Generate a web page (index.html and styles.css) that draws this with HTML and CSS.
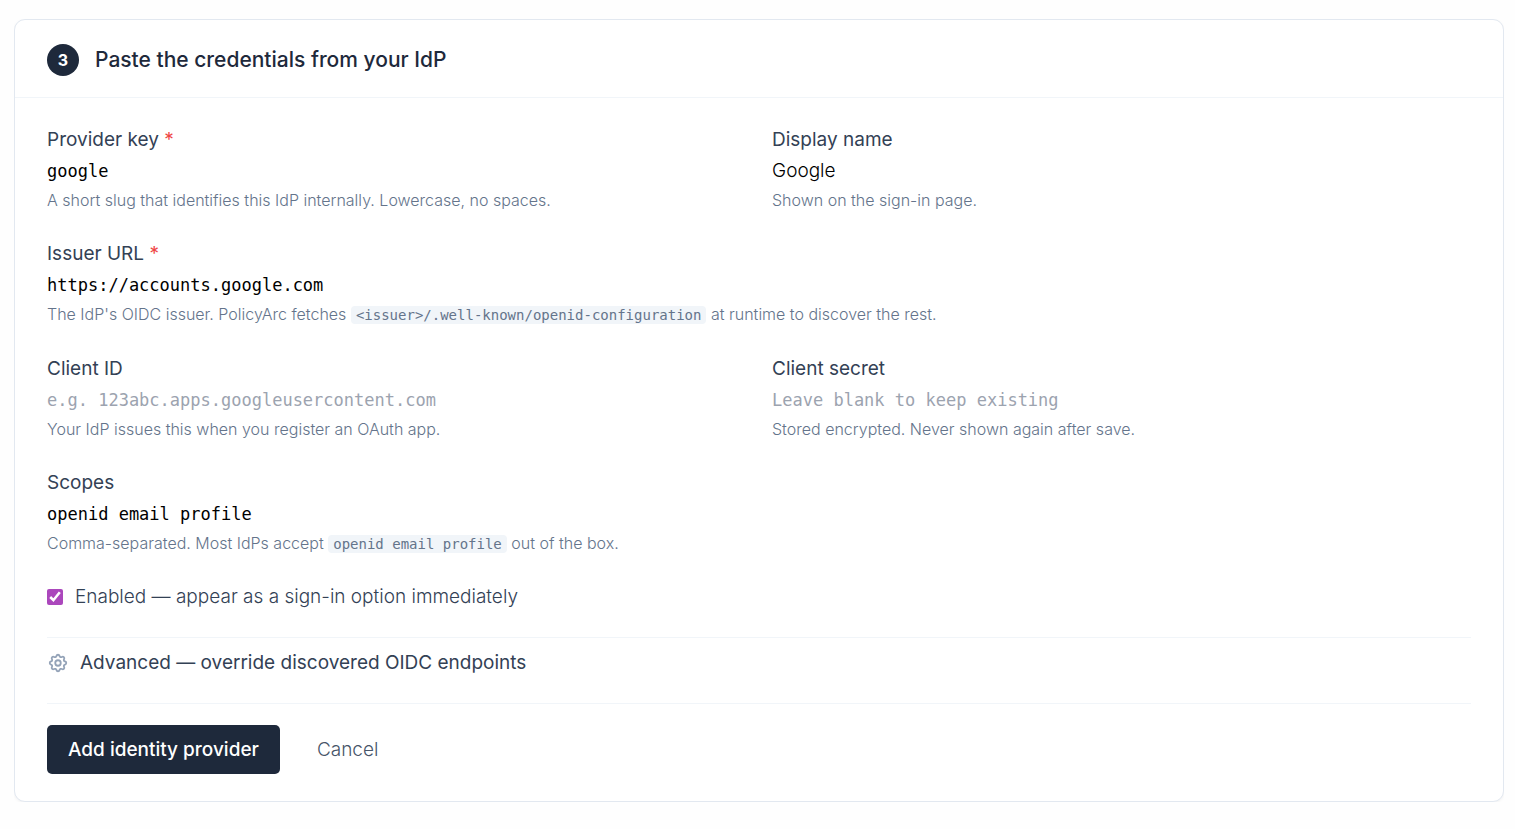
FILE: index.html
```html
<!DOCTYPE html>
<html lang="en">
  <head>
    <meta charset="UTF-8" />
    <meta name="viewport" content="width=device-width, initial-scale=1" />
    <title>Add identity provider</title>
    <link rel="stylesheet" href="styles.css">
  </head>
  <body>
    <section class="card">
      <header class="card-header">
        <span class="step">3</span>
        <h2>Paste the credentials from your IdP</h2>
      </header>

      <form class="card-body">
        <div class="fields">
          <div class="field">
            <label for="providerKey">Provider key <span class="required">*</span></label>
            <input class="mono" type="text" id="providerKey" value="google" required />
            <p class="help">A short slug that identifies this IdP internally. Lowercase, no spaces.</p>
          </div>

          <div class="field">
            <label for="displayName">Display name</label>
            <input type="text" id="displayName" value="Google" />
            <p class="help">Shown on the sign-in page.</p>
          </div>

          <div class="field wide">
            <label for="issuer">Issuer URL <span class="required">*</span></label>
            <input class="mono" type="text" id="issuer" value="https://accounts.google.com" required />
            <p class="help">The IdP's OIDC issuer. PolicyArc fetches <code>&lt;issuer&gt;/.well-known/openid-configuration</code> at runtime to discover the rest.</p>
          </div>

          <div class="field">
            <label for="clientId">Client ID</label>
            <input class="mono" type="text" id="clientId" placeholder="e.g. 123abc.apps.googleusercontent.com" />
            <p class="help">Your IdP issues this when you register an OAuth app.</p>
          </div>

          <div class="field">
            <label for="clientSecret">Client secret</label>
            <input class="mono" type="password" id="clientSecret" placeholder="Leave blank to keep existing" />
            <p class="help">Stored encrypted. Never shown again after save.</p>
          </div>

          <div class="field wide">
            <label for="scopes">Scopes</label>
            <input class="mono" type="text" id="scopes" value="openid email profile" />
            <p class="help">Comma-separated. Most IdPs accept <code>openid email profile</code> out of the box.</p>
          </div>
        </div>

        <label class="toggle" for="enabled">
          <input type="checkbox" id="enabled" checked />
          Enabled — appear as a sign-in option immediately
        </label>

        <details class="advanced">
          <summary>
            <svg viewBox="0 0 24 24" width="22" height="22" fill="none" stroke="currentColor" stroke-width="2" stroke-linecap="round" stroke-linejoin="round" aria-hidden="true">
              <path d="M10.325 4.317c.426-1.756 2.924-1.756 3.35 0a1.724 1.724 0 002.573 1.066c1.543-.94 3.31.826 2.37 2.37a1.724 1.724 0 001.065 2.572c1.756.426 1.756 2.924 0 3.35a1.724 1.724 0 00-1.066 2.573c.94 1.543-.826 3.31-2.37 2.37a1.724 1.724 0 00-2.572 1.065c-.426 1.756-2.924 1.756-3.35 0a1.724 1.724 0 00-2.573-1.066c-1.543.94-3.31-.826-2.37-2.37a1.724 1.724 0 00-1.065-2.572c-1.756-.426-1.756-2.924 0-3.35a1.724 1.724 0 001.066-2.573c-.94-1.543.826-3.31 2.37-2.37.996.608 2.296.07 2.572-1.065z" />
              <circle cx="12" cy="12" r="3" />
            </svg>
            Advanced — override discovered OIDC endpoints
          </summary>
        </details>

        <div class="actions">
          <button class="primary" type="submit">Add identity provider</button>
          <button class="cancel" type="button">Cancel</button>
        </div>
      </form>
    </section>
  </body>
</html>
```
FILE: styles.css
```css
* {
  box-sizing: border-box;
}
body {
  margin: 19px 11px 27px 14px;
  background: #fefefe;
  color: #334155;
  font-family: Inter, sans-serif;
  font-size: 19px;
  font-weight: 300;
  line-height: 28px;
}
h2,
p {
  margin: 0;
}
.card {
  background: #fff;
  border: 1px solid #e2e8f0;
  border-radius: 11px;
  box-shadow: 0 1px 3px rgba(15, 23, 42, 0.05);
}
.card-header {
  display: flex;
  align-items: center;
  gap: 16px;
  padding: 24px 32px 21px;
  border-bottom: 1px solid #f1f5f9;
}
.step {
  display: flex;
  align-items: center;
  justify-content: center;
  width: 32px;
  height: 32px;
  border-radius: 50%;
  background: #1e293b;
  color: #fff;
  font-size: 16px;
  font-weight: 700;
}
h2 {
  color: #1e293b;
  font-size: 21px;
  font-weight: 500;
  line-height: 32px;
}
.card-body {
  padding: 28px 32px 27px;
}
.fields {
  display: grid;
  grid-template-columns: 1fr 1fr;
  gap: 28px 26px;
}
.field {
  display: flex;
  flex-direction: column;
  gap: 3px;
}
.wide {
  grid-column: 1 / -1;
}
.field label {
  font-weight: 400;
}
.required {
  color: #ef4444;
}
.field input {
  width: 100%;
  height: 28px;
  padding: 0;
  border: none;
  outline: none;
  background: transparent;
  color: #000;
  font: inherit;
}
.field .mono {
  font-family: "DejaVu Sans Mono", monospace;
  font-size: 17px;
}
.field input::placeholder {
  color: #9ca3af;
}
.help {
  color: #64748b;
  font-size: 16px;
  line-height: 24px;
}
code {
  padding: 1px 5px;
  border-radius: 4px;
  background: #f1f5f9;
  font-family: "DejaVu Sans Mono", monospace;
  font-size: 14px;
}
.toggle {
  display: flex;
  align-items: center;
  gap: 12px;
  margin: 27px 0 26px;
}
.toggle input {
  width: 16px;
  height: 16px;
  margin: 0;
  accent-color: #ab47bc;
}
.advanced {
  padding: 11px 0 26px;
  border-top: 1px solid #f1f5f9;
}
.advanced summary {
  display: flex;
  align-items: center;
  gap: 11px;
  font-weight: 400;
  list-style: none;
  cursor: pointer;
}
.advanced svg {
  color: #94a3b8;
}
.actions {
  display: flex;
  gap: 16px;
  padding-top: 21px;
  border-top: 1px solid #f1f5f9;
}
button {
  height: 49px;
  padding: 0 21px;
  border: none;
  border-radius: 5px;
  font: inherit;
  cursor: pointer;
}
.primary {
  background: #1e293b;
  color: #fff;
  font-weight: 500;
}
.cancel {
  background: none;
  color: #475569;
}
```
